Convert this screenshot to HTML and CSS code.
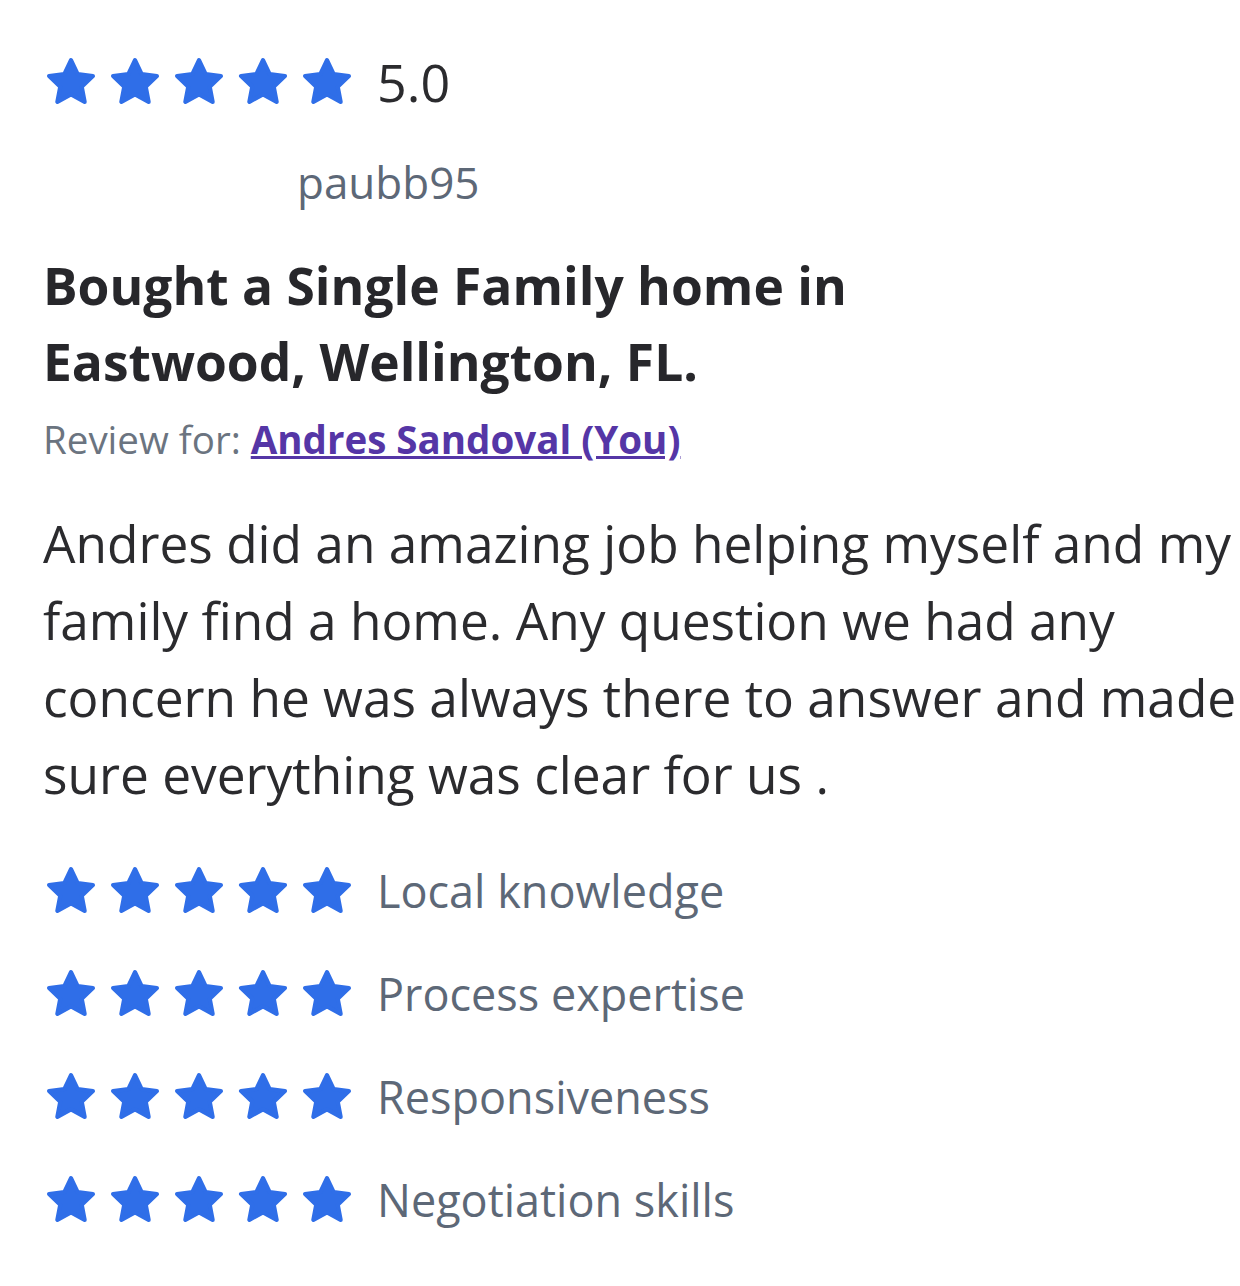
FILE: index.html
```html
<!DOCTYPE html>
<html>
<head>
<meta charset="utf-8">
<link rel="stylesheet" href="styles.css">
</head>
<body>
<svg width="0" height="0" class="defs">
  <defs>
    <symbol id="star" viewBox="0 0 24 24">
      <path d="M12 2.6l2.85 6.05 6.55.8-4.8 4.55 1.25 6.5L12 17.3l-5.85 3.2 1.25-6.5-4.8-4.55 6.55-.8z" fill="#2f6ee8" stroke="#2f6ee8" stroke-width="1.8" stroke-linejoin="round"/>
    </symbol>
  </defs>
</svg>
<div class="review">
  <div class="rating-row top">
    <div class="stars">
      <svg class="star"><use href="#star"/></svg>
      <svg class="star"><use href="#star"/></svg>
      <svg class="star"><use href="#star"/></svg>
      <svg class="star"><use href="#star"/></svg>
      <svg class="star"><use href="#star"/></svg>
    </div>
    <span class="score">5.0</span>
  </div>
  <div class="author">paubb95</div>
  <h2 class="title">Bought a Single Family home in<br>Eastwood, Wellington, FL.</h2>
  <div class="review-for">Review for: <a href="#" class="agent">Andres Sandoval (You)</a></div>
  <p class="body">Andres did an amazing job helping myself and my family find a home. Any question we had any concern he was always there to answer and made sure everything was clear for us .</p>
  <div class="categories">
    <div class="rating-row">
      <div class="stars">
        <svg class="star"><use href="#star"/></svg>
        <svg class="star"><use href="#star"/></svg>
        <svg class="star"><use href="#star"/></svg>
        <svg class="star"><use href="#star"/></svg>
        <svg class="star"><use href="#star"/></svg>
      </div>
      <span class="cat">Local knowledge</span>
    </div>
    <div class="rating-row">
      <div class="stars">
        <svg class="star"><use href="#star"/></svg>
        <svg class="star"><use href="#star"/></svg>
        <svg class="star"><use href="#star"/></svg>
        <svg class="star"><use href="#star"/></svg>
        <svg class="star"><use href="#star"/></svg>
      </div>
      <span class="cat">Process expertise</span>
    </div>
    <div class="rating-row">
      <div class="stars">
        <svg class="star"><use href="#star"/></svg>
        <svg class="star"><use href="#star"/></svg>
        <svg class="star"><use href="#star"/></svg>
        <svg class="star"><use href="#star"/></svg>
        <svg class="star"><use href="#star"/></svg>
      </div>
      <span class="cat">Responsiveness</span>
    </div>
    <div class="rating-row">
      <div class="stars">
        <svg class="star"><use href="#star"/></svg>
        <svg class="star"><use href="#star"/></svg>
        <svg class="star"><use href="#star"/></svg>
        <svg class="star"><use href="#star"/></svg>
        <svg class="star"><use href="#star"/></svg>
      </div>
      <span class="cat">Negotiation skills</span>
    </div>
  </div>
</div>
</body>
</html>
```

FILE: styles.css
```css
html, body {
  margin: 0;
  padding: 0;
  background: #ffffff;
  overflow: hidden;
}
body {
  font-family: "Open Sans", "Noto Sans", sans-serif;
  color: #2b2b2e;
}
.defs {
  position: absolute;
  width: 0;
  height: 0;
}
.review {
  padding: 50px 0 0 43px;
}
.rating-row {
  display: flex;
  align-items: center;
  gap: 22px;
}
.stars {
  display: flex;
  gap: 8px;
}
.star {
  width: 56px;
  height: 56px;
  display: block;
}
.score {
  font-size: 52px;
  color: #2b2b2e;
  line-height: 64px;
}
.author {
  margin: 38px 0 0 254px;
  font-size: 44px;
  color: #5d6877;
  line-height: 60px;
}
.title {
  margin: 35px 0 0 0;
  font-size: 51.5px;
  font-weight: 700;
  line-height: 76px;
  color: #27272b;
}
.review-for {
  font-size: 38.5px;
  color: #6b7480;
  line-height: 60px;
  margin-top: 10px;
}
.agent {
  color: #5536a6;
  font-weight: 700;
  text-decoration: underline;
}
.body {
  margin: 36px -20px 0 0;
  font-size: 51.4px;
  line-height: 77px;
  color: #2b2b2e;
}
.categories {
  margin-top: 46px;
  display: flex;
  flex-direction: column;
  gap: 39px;
}
.cat {
  font-size: 45px;
  color: #5d6877;
  line-height: 64px;
}
```
